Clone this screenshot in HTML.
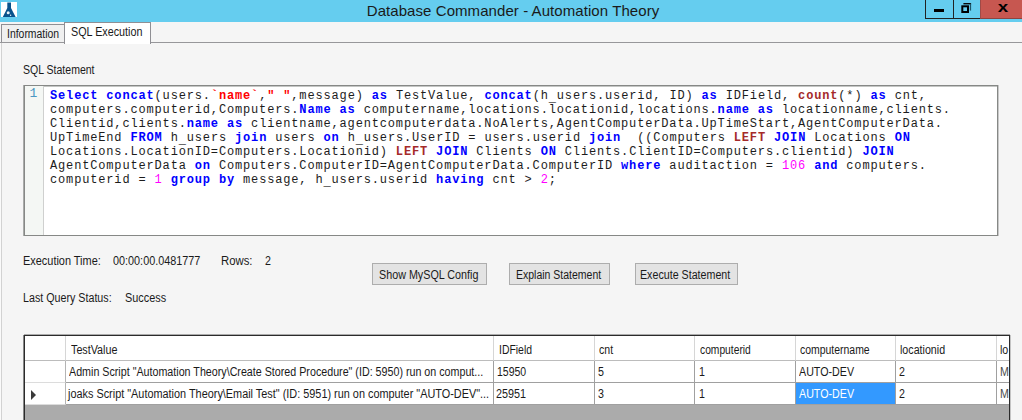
<!DOCTYPE html>
<html><head><meta charset="utf-8"><title>Database Commander - Automation Theory</title>
<style>
*{box-sizing:border-box;margin:0;padding:0}
html,body{width:1022px;height:420px;overflow:hidden;background:#f5f5f5}
body{position:relative;font-family:"Liberation Sans",sans-serif;font-size:12px;color:#1a1a1a}
.abs{position:absolute;white-space:nowrap}
.t{position:absolute;white-space:pre;font-size:12px;line-height:14px;color:#1a1a1a;transform-origin:0 0}
#title{left:0;top:0;width:1022px;height:22px;background:#65cdef}
#ttext{left:0;width:1022px;top:1px;text-align:center;font-size:15px;line-height:20px;color:#1a1a1a;padding-left:4px;letter-spacing:0.07px}
#editor{left:24px;top:85px;width:974px;height:151px;background:#fff;border:1px solid #868886;box-shadow:-1px 0 0 0 #a9aba9, 1px 0 0 0 #c8c8c8, inset 0 1px 0 0 #c4c6c4, inset 1px 0 0 0 #dcdedc}
#gutter{left:0;top:0;width:19px;height:149px;background:#f4f7f4;border-right:1px solid #cfd0cf}
#code{left:25px;top:3px;font-family:"Liberation Mono",monospace;font-size:12px;line-height:14px;letter-spacing:0.842px;color:#1c1c1c;white-space:pre}
.k{color:#0000ff;font-weight:bold}.r{color:#a52a2a;font-weight:bold}.s{color:#ff0000;font-weight:bold}.n{color:#ff00ff}.u{position:relative;top:2px}
.btn{height:22px;border:1px solid #adadad;background:#e3e3e3}
#grid{left:24px;top:335px;width:986px;height:90px;background:#ababab;border:1px solid #2b2b2b;overflow:hidden;box-shadow:-1px 0 0 0 rgba(0,0,0,.45),0 -1px 0 0 rgba(0,0,0,.3),1px 0 0 0 rgba(0,0,0,.2),inset 0 1px 0 0 rgba(0,0,0,.25)}
.cell{background:#fff;border-right:1px solid #a0a0a0;border-bottom:1px solid #a0a0a0;height:22px}
.rh{background:#fff;border-right:1px solid #b4b4b4;border-bottom:1px solid #dcdcdc;height:22px}
.hd{background:#fff;border-right:1px solid #d6d6d6;border-bottom:1px solid #bcbcbc;height:25px}
</style></head><body>
<div id="title" class="abs"></div>
<div id="ttext" class="abs">Database Commander - Automation Theory</div>
<svg class="abs" style="left:1px;top:2px" width="16" height="15" viewBox="0 0 16 15"><rect width="16" height="15" fill="#fff"/><path d="M6.3 0.4H10V6L14.6 15H1.8L6.3 6Z" fill="#08528c"/><circle cx="7.2" cy="10.8" r="1.5" fill="#e8f0f6"/><circle cx="9.6" cy="13.3" r="0.7" fill="#e8f0f6"/></svg>
<!-- window buttons -->
<div class="abs" style="left:925px;top:0;width:29px;height:19px;border-left:1px solid #222;border-bottom:1px solid #222"></div>
<div class="abs" style="left:953px;top:0;width:27px;height:19px;border-left:1px solid #222;border-bottom:1px solid #222"></div>
<div class="abs" style="left:980px;top:0;width:42px;height:19px;background:#c75750;border-bottom:1px solid #8e4440;border-left:1px solid #a04a46"></div>
<div class="abs" style="left:934px;top:9px;width:10px;height:3px;background:#000"></div>
<svg class="abs" style="left:960px;top:2px" width="14" height="12" viewBox="0 0 14 12"><path d="M3.4 1.7H11.1" fill="none" stroke="#0a0a0a" stroke-width="1.4"/><path d="M10.5 1.7V8.6" fill="none" stroke="#1e566a" stroke-width="1.2"/><rect x="2.3" y="4.3" width="5.7" height="5.7" fill="none" stroke="#000" stroke-width="2"/></svg>
<div class="abs" style="left:996px;top:-2px;width:14px;font-size:15px;font-weight:bold;line-height:18px;color:#000;text-align:center;transform:scaleX(1.25)">x</div>

<!-- tabs -->
<div class="abs" style="left:1px;top:24px;width:64px;height:19px;border:1px solid #8f8f94;border-bottom:none;background:#f0f0f0"></div>
<div class="abs" style="left:0;top:42px;width:1022px;height:1px;background:#97979a"></div>
<div class="abs" style="left:0;top:43px;width:1px;height:377px;background:#fafafa"></div>
<div class="abs" style="left:1px;top:43px;width:1px;height:377px;background:#d2d2d2"></div>
<div class="abs" style="left:64px;top:22px;width:87px;height:22px;border:1px solid #8f8f94;border-bottom:none;background:#fff"></div>

<div id="editor" class="abs">
<div id="gutter" class="abs"></div>
<div class="abs" style="left:4.6px;top:1.2px;font-family:'Liberation Mono',monospace;font-size:13px;line-height:14px;color:#4b96c2">1</div>
<div id="code" class="abs"><span class="k">Select concat</span>(users.<span class="s">`name`</span>,<span class="s">" "</span>,message) <span class="k">as</span> TestValue, <span class="k">concat</span>(h<span class="u">_</span>users.userid, ID) <span class="k">as</span> IDField, <span class="r">count</span>(*) <span class="k">as</span> cnt,
computers.computerid,Computers.<span class="k">Name as</span> computername,locations.locationid,locations.<span class="k">name as</span> locationname,clients.
Clientid,clients.<span class="k">name as</span> clientname,agentcomputerdata.NoAlerts,AgentComputerData.UpTimeStart,AgentComputerData.
UpTimeEnd <span class="k">FROM</span> h<span class="u">_</span>users <span class="k">join</span> users <span class="k">on</span> h<span class="u">_</span>users.UserID = users.userid <span class="k">join</span>  ((Computers <span class="r">LEFT</span> <span class="k">JOIN</span> Locations <span class="k">ON</span>
Locations.LocationID=Computers.Locationid) <span class="r">LEFT</span> <span class="k">JOIN</span> Clients <span class="k">ON</span> Clients.ClientID=Computers.clientid) <span class="k">JOIN</span>
AgentComputerData <span class="k">on</span> Computers.ComputerID=AgentComputerData.ComputerID <span class="k">where</span> auditaction = <span class="n">106</span> <span class="k">and</span> computers.
computerid = <span class="n">1</span> <span class="k">group by</span> message, h<span class="u">_</span>users.userid <span class="k">having</span> cnt &gt; <span class="n">2</span>;</div>
</div>

<div class="abs btn" style="left:372px;top:263px;width:115px"></div>
<div class="abs btn" style="left:509px;top:263px;width:101px"></div>
<div class="abs btn" style="left:635px;top:263px;width:103px"></div>

<div class="t" style="left:6.73px;top:26.80px;transform:scaleX(0.8690)">Information</div>
<div class="t" style="left:71.10px;top:25.00px;transform:scaleX(0.8974)">SQL Execution</div>
<div class="t" style="left:22.72px;top:63.00px;transform:scaleX(0.8765)">SQL Statement</div>
<div class="t" style="left:22.89px;top:253.50px;transform:scaleX(0.9108)">Execution Time:</div>
<div class="t" style="left:113.40px;top:253.50px;transform:scaleX(0.9031)">00:00:00.0481777</div>
<div class="t" style="left:220.75px;top:253.50px;transform:scaleX(0.9452)">Rows:</div>
<div class="t" style="left:264.91px;top:253.50px;transform:scaleX(0.8900)">2</div>
<div class="t" style="left:22.91px;top:290.50px;transform:scaleX(0.8918)">Last Query Status:</div>
<div class="t" style="left:124.69px;top:290.50px;transform:scaleX(0.9068)">Success</div>
<div class="t" style="left:378.90px;top:267.80px;transform:scaleX(0.8963)">Show MySQL Config</div>
<div class="t" style="left:515.52px;top:267.80px;transform:scaleX(0.8750)">Explain Statement</div>
<div class="t" style="left:640.31px;top:267.80px;transform:scaleX(0.8900)">Execute Statement</div>

<div id="grid" class="abs">
 <div class="abs hd" style="left:0;top:0;width:41px"></div>
 <div class="abs hd" style="left:41px;top:0px;width:428px"></div>
 <div class="abs hd" style="left:469px;top:0px;width:101px"></div>
 <div class="abs hd" style="left:570px;top:0px;width:100px"></div>
 <div class="abs hd" style="left:670px;top:0px;width:101px"></div>
 <div class="abs hd" style="left:771px;top:0px;width:100px"></div>
 <div class="abs hd" style="left:871px;top:0px;width:101px"></div>
 <div class="abs hd" style="left:972px;top:0px;width:100px"></div>
 <div class="abs rh" style="left:0;top:25px;width:41px"></div>
 <div class="abs cell" style="left:41px;top:25px;width:428px"></div>
 <div class="abs cell" style="left:469px;top:25px;width:101px"></div>
 <div class="abs cell" style="left:570px;top:25px;width:100px"></div>
 <div class="abs cell" style="left:670px;top:25px;width:101px"></div>
 <div class="abs cell" style="left:771px;top:25px;width:100px"></div>
 <div class="abs cell" style="left:871px;top:25px;width:101px"></div>
 <div class="abs cell" style="left:972px;top:25px;width:100px"></div>
 <div class="abs rh" style="left:0;top:47px;width:41px"></div>
 <div class="abs" style="left:6px;top:53.5px;width:0;height:0;border-left:5px solid #3a3a3a;border-top:5px solid transparent;border-bottom:5px solid transparent"></div>
 <div class="abs cell" style="left:41px;top:47px;width:428px"></div>
 <div class="abs cell" style="left:469px;top:47px;width:101px"></div>
 <div class="abs cell" style="left:570px;top:47px;width:100px"></div>
 <div class="abs cell" style="left:670px;top:47px;width:101px"></div>
 <div class="abs cell" style="left:771px;top:47px;width:100px;background:#3399ff"></div>
 <div class="abs cell" style="left:871px;top:47px;width:101px"></div>
 <div class="abs cell" style="left:972px;top:47px;width:100px"></div>
<div class="t" style="left:46.40px;top:6.80px;transform:scaleX(0.8962)">TestValue</div>
<div class="t" style="left:473.83px;top:6.80px;transform:scaleX(0.8694)">IDField</div>
<div class="t" style="left:574.30px;top:6.80px;transform:scaleX(0.8813)">cnt</div>
<div class="t" style="left:675.00px;top:6.80px;transform:scaleX(0.8559)">computerid</div>
<div class="t" style="left:775.20px;top:6.80px;transform:scaleX(0.8700)">computername</div>
<div class="t" style="left:875.31px;top:6.80px;transform:scaleX(0.8898)">locationid</div>
<div class="t" style="left:975.31px;top:6.80px;transform:scaleX(0.8900)">lo</div>
<div class="t" style="left:44.40px;top:29.00px;transform:scaleX(0.8918)">Admin Script "Automation Theory\Create Stored Procedure" (ID: 5950) run on comput...</div>
<div class="t" style="left:472.02px;top:29.00px;transform:scaleX(0.8750)">15950</div>
<div class="t" style="left:573.01px;top:29.00px;transform:scaleX(0.8900)">5</div>
<div class="t" style="left:673.61px;top:29.00px;transform:scaleX(0.8900)">1</div>
<div class="t" style="left:773.60px;top:29.00px;transform:scaleX(0.8903)">AUTO-DEV</div>
<div class="t" style="left:873.71px;top:29.00px;transform:scaleX(0.8900)">2</div>
<div class="t" style="left:974.61px;top:29.00px;transform:scaleX(0.8900);color:#4a4a4a">M</div>
<div class="t" style="left:42.60px;top:51.00px;transform:scaleX(0.9065)">joaks Script "Automation Theory\Email Test" (ID: 5951) run on computer "AUTO-DEV"...</div>
<div class="t" style="left:471.20px;top:51.00px;transform:scaleX(0.9000)">25951</div>
<div class="t" style="left:573.01px;top:51.00px;transform:scaleX(0.8900)">3</div>
<div class="t" style="left:673.61px;top:51.00px;transform:scaleX(0.8900)">1</div>
<div class="t" style="left:773.60px;top:51.00px;transform:scaleX(0.8903);color:#ffffff">AUTO-DEV</div>
<div class="t" style="left:873.71px;top:51.00px;transform:scaleX(0.8900)">2</div>
<div class="t" style="left:974.61px;top:51.00px;transform:scaleX(0.8900);color:#4a4a4a">M</div>
</div>
</body></html>
